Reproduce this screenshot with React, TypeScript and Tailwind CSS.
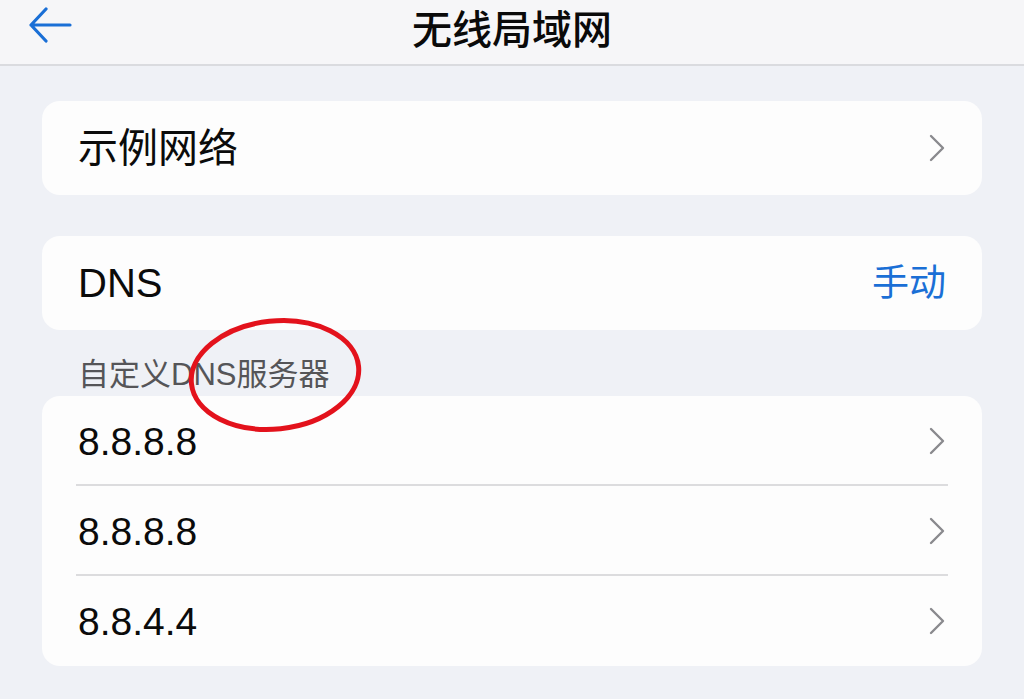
import React from 'react'

const FONT = { fontFamily: '"Liberation Sans", "Noto Sans CJK SC", sans-serif' }

function Chevron() {
  return (
    <svg width="18" height="28" viewBox="0 0 18 28" fill="none" className="shrink-0">
      <path d="M3 2 L15 14 L3 26" stroke="#8a8a8e" strokeWidth="2.4" strokeLinecap="round" strokeLinejoin="round" />
    </svg>
  )
}

function Row({ label, right, divider, size = 'text-[39px]' }: { label: string; right?: React.ReactNode; divider?: boolean; size?: string }) {
  return (
    <div className="relative flex h-[90px] items-center justify-between pl-[36px] pr-[36px]">
      <span className={`${size} leading-none text-[#0b0b0b]`}>{label}</span>
      {right ?? <Chevron />}
      {divider && <div className="absolute bottom-0 left-[34px] right-[34px] h-[2px] bg-[#dcdcde]" />}
    </div>
  )
}

export default function App() {
  return (
    <div className="relative h-[699px] w-[1024px] overflow-hidden bg-[#eff1f6]" style={FONT}>
      <div className="absolute left-0 top-0 h-[3px] w-[58px] rounded-b bg-white" />
      <header className="relative flex h-[66px] items-center justify-center border-b-2 border-[#dadbdf] bg-[#f6f6f8]">
        <svg className="absolute left-[28px] top-[7px]" width="44" height="36" viewBox="0 0 44 36" fill="none">
          <path d="M18 2 L3 18 L18 34 M3 18 H42" stroke="#1a6fd6" strokeWidth="3.2" strokeLinecap="round" strokeLinejoin="round" />
        </svg>
        <h1 className="-mt-[4px] text-[40px] font-medium leading-none text-[#0a0a0a]">无线局域网</h1>
      </header>

      <div className="flex flex-col px-[42px] pt-[35px]">
        <div className="rounded-[18px] bg-[#fdfdfd]">
          <div className="h-[2px]" />
          <Row label="示例网络" size="text-[40px]" />
          <div className="h-[2px]" />
        </div>

        <div className="mt-[41px] rounded-[18px] bg-[#fdfdfd]">
          <div className="h-[2px]" />
          <Row label="DNS" size="text-[40px]" right={<span className="text-[37px] leading-none text-[#1a6fd6]">手动</span>} />
          <div className="h-[2px]" />
        </div>

        <div className="px-[36px] pb-[5px] pt-[28px] text-[31px] leading-[33px] text-[#555558]">自定义DNS服务器</div>

        <div className="rounded-[18px] bg-[#fdfdfd]">
          <Row label="8.8.8.8" divider />
          <Row label="8.8.8.8" divider />
          <Row label="8.8.4.4" />
        </div>
      </div>

      <svg className="pointer-events-none absolute left-[180px] top-[312px]" width="190" height="126" viewBox="0 0 190 126" fill="none">
        <ellipse cx="95" cy="63" rx="84" ry="54" transform="rotate(-6 95 63)" stroke="#e3121c" strokeWidth="5" />
      </svg>
    </div>
  )
}
